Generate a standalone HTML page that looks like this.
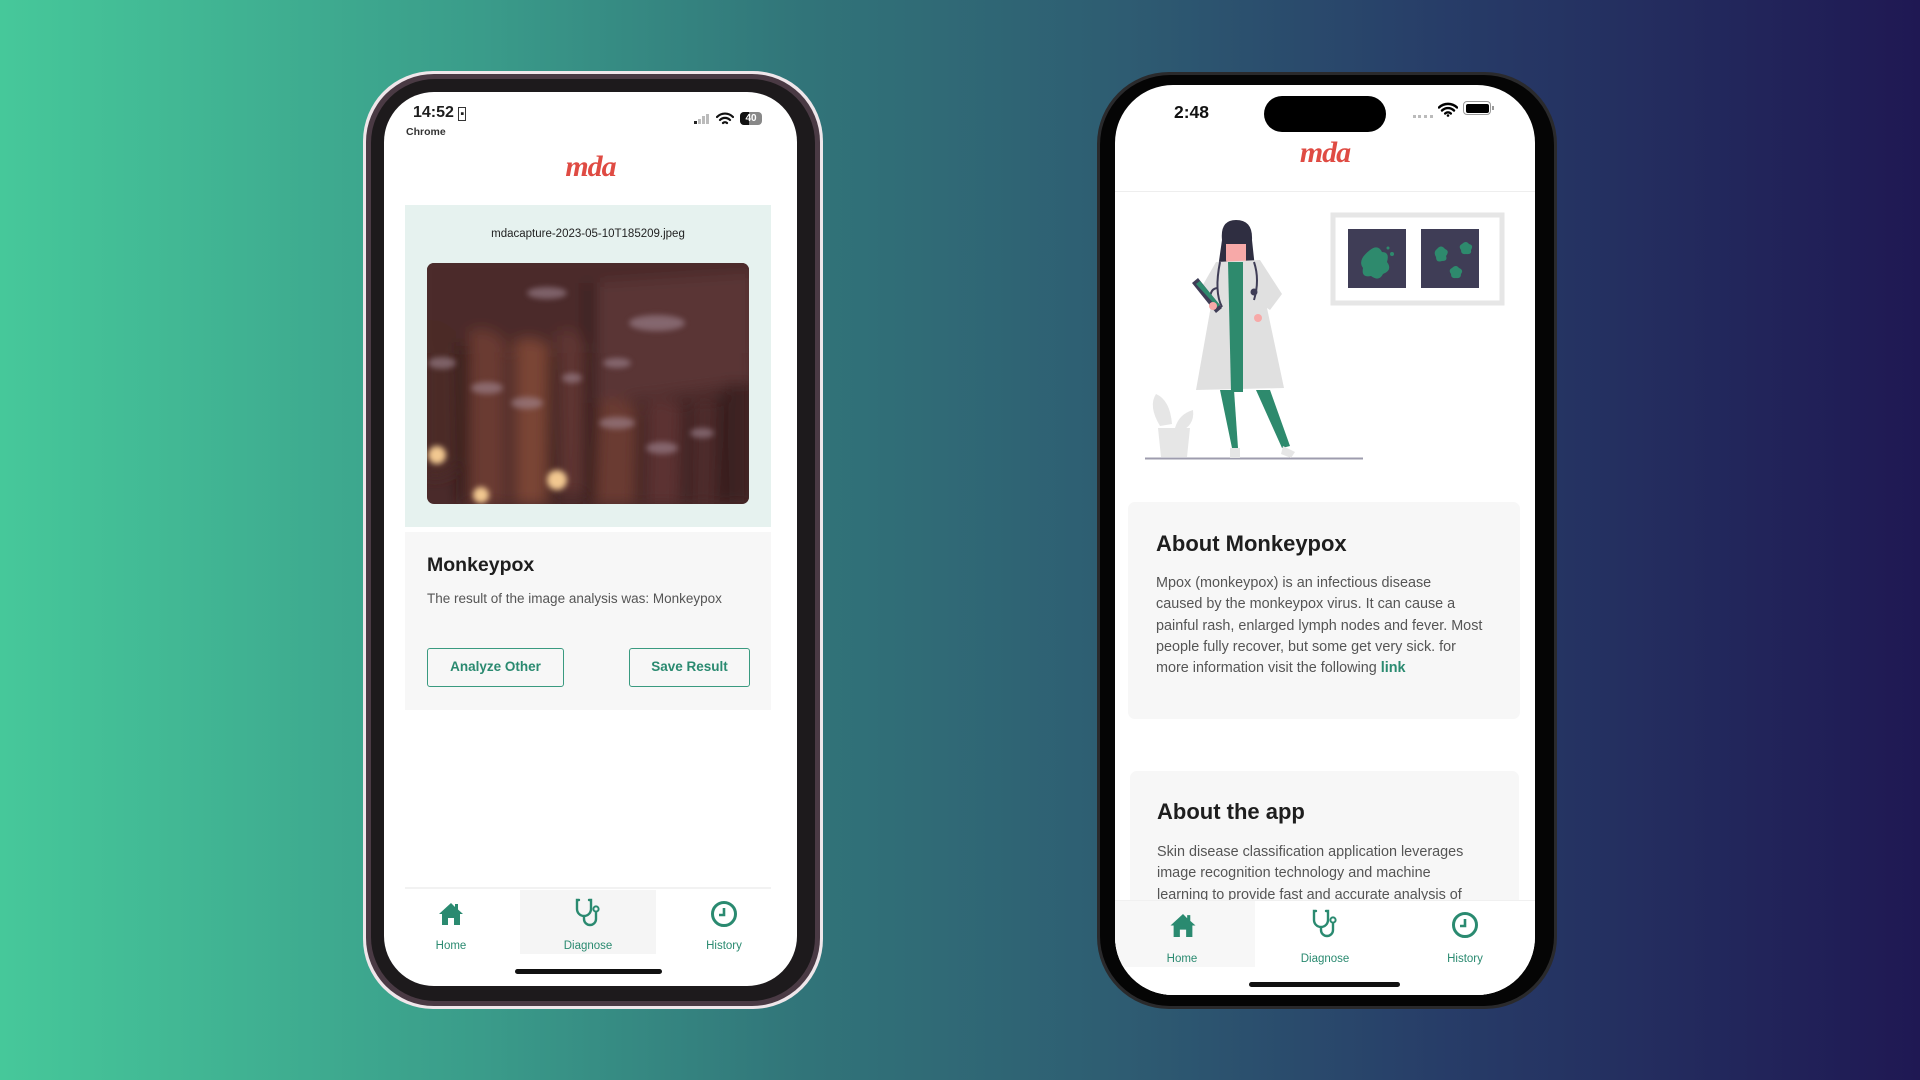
<!DOCTYPE html>
<html><head><meta charset="utf-8"><style>
*{margin:0;padding:0;box-sizing:border-box}
body{width:1920px;height:1080px;overflow:hidden;position:relative;font-family:"Liberation Sans",sans-serif;background:linear-gradient(90deg,#46c89a 0%,#3a9c8a 25%,#317479 42%,#2e5d72 58%,#273d68 75%,#1f1853 100%)}
.a{position:absolute}
.t{color:#1e1e1e}
.g{color:#2a8a70}
.logo{font-family:"Liberation Serif",serif;font-style:italic;font-weight:bold;color:#df4b43;font-size:30px;letter-spacing:-1px}
.btn{position:absolute;border:1.5px solid #3a9a80;border-radius:3px;color:#2a8a70;font-weight:bold;font-size:13.5px;text-align:center;line-height:36px;background:#f7f7f7}
.lbl{position:absolute;font-size:11.5px;color:#2a8a70;text-align:center;width:100px}
.p{font-size:14.4px;color:#555;line-height:21.3px;white-space:nowrap}
</style></head><body>

<!-- Phone 1 -->
<div class="a" style="left:363px;top:71px;width:460px;height:938px;border-radius:70px;background:#efe6ea"></div>
<div class="a" style="left:366px;top:74px;width:454px;height:932px;border-radius:68px;background:#4a3a44"></div>
<div class="a" style="left:371px;top:79px;width:444px;height:922px;border-radius:64px;background:#1d1a1c"></div>
<div class="a" style="left:384px;top:92px;width:413px;height:894px;border-radius:50px;background:#fff;overflow:hidden">
  <div class="a t" style="left:29px;top:12px;font-size:16px;font-weight:bold">14:52 <span style="font-size:11px;border:1.5px solid #333;padding:0 1px">▪</span></div>
  <div class="a t" style="left:22px;top:34px;font-size:10.5px;font-weight:bold;color:#333">Chrome</div>
  <div class="a" style="left:310px;top:22px;width:17px;height:10px">
    <div class="a" style="left:0;top:7px;width:3px;height:3px;background:#222"></div>
    <div class="a" style="left:4px;top:5px;width:3px;height:5px;background:#bbb"></div>
    <div class="a" style="left:8px;top:2px;width:3px;height:8px;background:#bbb"></div>
    <div class="a" style="left:12px;top:0;width:3px;height:10px;background:#bbb"></div>
  </div>
  <svg class="a" style="left:332px;top:20px" width="18" height="14" viewBox="0 0 18 14"><path d="M1 5a11 11 0 0 1 16 0M4 8a7 7 0 0 1 10 0M7 11a3 3 0 0 1 4 0" stroke="#111" stroke-width="2.2" fill="none" stroke-linecap="round"/></svg>
  <div class="a" style="left:356px;top:20px;width:22px;height:13px;border-radius:4px;background:#888;font-size:10px;font-weight:bold;color:#fff;line-height:13px;text-align:center"><span style="background:#111;display:block;width:9px;height:13px;position:absolute;left:0;border-radius:4px 0 0 4px"></span><span style="position:relative">40</span></div>
  <div class="a logo" style="left:0;width:413px;text-align:center;top:58px">mda</div>
  <div class="a" style="left:21px;top:113px;width:366px;height:322px;background:#e6f2ef"></div>
  <div class="a" style="left:21px;top:136px;width:366px;text-align:center;font-size:11.5px;color:#222">mdacapture-2023-05-10T185209.jpeg</div>
  <svg class="a" style="left:43px;top:171px;border-radius:7px" width="322" height="241" viewBox="0 0 322 241">
    <defs><filter id="b" x="-20%" y="-20%" width="140%" height="140%"><feGaussianBlur stdDeviation="7"/></filter><filter id="b2"><feGaussianBlur stdDeviation="3"/></filter></defs>
    <rect width="322" height="241" fill="#4a2a2a"/>
    <g filter="url(#b)">
      <rect x="-10" y="-10" width="342" height="100" fill="#4b2a2c"/>
      <path d="M-5 60 Q10 50 30 70 L32 200 Q15 220 -5 210Z" fill="#4c2a27"/>
      <path d="M42 70 Q60 60 78 80 L78 241 L42 241Z" fill="#6a3a30"/>
      <path d="M88 80 Q105 70 122 85 L120 241 L88 241Z" fill="#7a4434"/>
      <path d="M130 70 Q145 60 158 80 L156 230 L132 230Z" fill="#5e3430"/>
      <path d="M168 20 L325 10 L325 120 L168 140Z" fill="#5a3434"/>
      <path d="M172 140 Q190 130 210 145 L208 241 L168 241Z" fill="#6a3a30"/>
      <path d="M220 140 Q238 130 255 145 L252 241 L218 241Z" fill="#5c3230"/>
      <path d="M264 140 Q280 130 292 140 L290 241 L262 241Z" fill="#4e2c2c"/>
      <path d="M298 120 L325 120 L325 241 L296 241Z" fill="#3e2424"/>
      <rect x="33" y="80" width="7" height="160" fill="#1e1010"/>
      <rect x="123" y="90" width="6" height="150" fill="#241313"/>
      <rect x="160" y="20" width="7" height="220" fill="#1e1010"/>
      <rect x="212" y="150" width="5" height="90" fill="#241313"/>
      <rect x="257" y="140" width="5" height="100" fill="#1e1010"/>
      <rect x="292" y="130" width="5" height="110" fill="#1e1010"/>
    </g>
    <g filter="url(#b2)" fill="#a8909e" opacity=".55"><ellipse cx="60" cy="125" rx="16" ry="6"/><ellipse cx="100" cy="140" rx="16" ry="6"/><ellipse cx="145" cy="115" rx="10" ry="5"/><ellipse cx="190" cy="160" rx="18" ry="6"/><ellipse cx="235" cy="185" rx="16" ry="6"/><ellipse cx="275" cy="170" rx="12" ry="5"/><ellipse cx="230" cy="60" rx="28" ry="8"/><ellipse cx="15" cy="100" rx="14" ry="6"/><ellipse cx="120" cy="30" rx="20" ry="6"/><ellipse cx="190" cy="100" rx="14" ry="5"/></g>
    <g filter="url(#b2)" fill="#f2c890"><circle cx="10" cy="192" r="9"/><circle cx="54" cy="232" r="8"/><circle cx="130" cy="217" r="10"/></g>
  </svg>
  <div class="a" style="left:21px;top:440px;width:366px;height:178px;background:#f7f7f7"></div>
  <div class="a t" style="left:43px;top:462px;font-size:19.5px;font-weight:bold">Monkeypox</div>
  <div class="a" style="left:43px;top:499px;font-size:13.5px;color:#555">The result of the image analysis was: Monkeypox</div>
  <div class="btn" style="left:43px;top:556px;width:137px;height:39px">Analyze Other</div>
  <div class="btn" style="left:245px;top:556px;width:121px;height:39px">Save Result</div>
  <div class="a" style="left:21px;top:795px;width:366px;height:2px;background:#f2f2f2"></div>
  <div class="a" style="left:136px;top:798px;width:136px;height:64px;background:#f5f5f5"></div>
  <svg class="a" style="left:54px;top:810px" width="26" height="24" viewBox="0 0 26 24"><path d="M13 1 L1 12 L4 12 L4 23 L10 23 L10 16 L16 16 L16 23 L22 23 L22 12 L25 12 L20 7.5 L20 2 L17 2 L17 5Z" fill="#2a8a70"/></svg>
  <svg class="a" style="left:191px;top:806px" width="26" height="30" viewBox="0 0 26 30"><path d="M4 2 L2 2 L2 11 A7 7 0 0 0 16 11 L16 2 L14 2 M9 18 L9 21 A6 6 0 0 0 21 21 L21 14" stroke="#2a8a70" stroke-width="2.4" fill="none" stroke-linecap="round"/><circle cx="21" cy="11" r="2.6" stroke="#2a8a70" stroke-width="2" fill="none"/></svg>
  <svg class="a" style="left:326px;top:808px" width="28" height="28" viewBox="0 0 28 28"><circle cx="14" cy="14" r="11.5" stroke="#2a8a70" stroke-width="3" fill="none"/><path d="M14 8 L14 15 L9 15" stroke="#2a8a70" stroke-width="2.6" fill="none"/></svg>
  <div class="lbl" style="left:17px;top:848px">Home</div>
  <div class="lbl" style="left:154px;top:848px">Diagnose</div>
  <div class="lbl" style="left:290px;top:848px">History</div>
  <div class="a" style="left:131px;top:877px;width:147px;height:5px;border-radius:3px;background:#111"></div>
</div>

<!-- Phone 2 -->
<div class="a" style="left:1097px;top:72px;width:460px;height:937px;border-radius:72px;background:#2a2a2c"></div>
<div class="a" style="left:1100px;top:75px;width:454px;height:931px;border-radius:70px;background:#050505"></div>
<div class="a" style="left:1115px;top:85px;width:420px;height:910px;border-radius:58px;background:#fff;overflow:hidden">
  <div class="a t" style="left:59px;top:17px;font-size:17.5px;font-weight:bold;color:#111">2:48</div>
  <div class="a" style="left:149px;top:11px;width:122px;height:36px;border-radius:18px;background:#000"></div>
  <div class="a" style="left:298px;top:30px;width:20px;height:3px;border-top:3px dotted #bbb"></div>
  <svg class="a" style="left:323px;top:17px" width="20" height="15" viewBox="0 0 20 15"><path d="M1 5.5a13 13 0 0 1 18 0M4 8.5a8.5 8.5 0 0 1 12 0M7.2 11.5a4 4 0 0 1 5.6 0" stroke="#000" stroke-width="2.4" fill="none" stroke-linecap="round"/><circle cx="10" cy="13.5" r="1.3"/></svg>
  <div class="a" style="left:348px;top:16px;width:28px;height:14px;border-radius:4px;border:1.5px solid #999;padding:1.5px"><div style="width:100%;height:100%;background:#000;border-radius:2px"></div></div>
  <div class="a" style="left:377px;top:21px;width:2px;height:4px;background:#999"></div>
  <div class="a logo" style="left:0;width:420px;text-align:center;top:51px">mda</div>
  <div class="a" style="left:0;top:106px;width:420px;height:1px;background:#eee"></div>
  <div class="a" style="left:13px;top:417px;width:392px;height:217px;border-radius:7px;background:#f7f7f7"></div>
  <div class="a t" style="left:41px;top:446px;font-size:22px;font-weight:bold">About Monkeypox</div>
  <div class="a p" style="left:41px;top:488px">Mpox (monkeypox) is an infectious disease<br>caused by the monkeypox virus. It can cause a<br>painful rash, enlarged lymph nodes and fever. Most<br>people fully recover, but some get very sick. for<br>more information visit the following <b style="color:#2a8a70">link</b></div>
  <div class="a" style="left:15px;top:686px;width:389px;height:230px;border-radius:7px;background:#f7f7f7"></div>
  <div class="a t" style="left:42px;top:714px;font-size:22px;font-weight:bold">About the app</div>
  <div class="a p" style="left:42px;top:757px">Skin disease classification application leverages<br>image recognition technology and machine<br>learning to provide fast and accurate analysis of</div>
  <div class="a" style="left:0;top:815px;width:420px;height:95px;background:#fff;border-top:1px solid #f0f0f0"></div>
  <div class="a" style="left:0;top:816px;width:140px;height:66px;background:#f7f7f7"></div>
  <svg class="a" style="left:54px;top:828px" width="28" height="25" viewBox="0 0 26 24"><path d="M13 1 L1 12 L4 12 L4 23 L10 23 L10 16 L16 16 L16 23 L22 23 L22 12 L25 12 L20 7.5 L20 2 L17 2 L17 5Z" fill="#2a8a70"/></svg>
  <svg class="a" style="left:197px;top:824px" width="26" height="30" viewBox="0 0 26 30"><path d="M4 2 L2 2 L2 11 A7 7 0 0 0 16 11 L16 2 L14 2 M9 18 L9 21 A6 6 0 0 0 21 21 L21 14" stroke="#2a8a70" stroke-width="2.4" fill="none" stroke-linecap="round"/><circle cx="21" cy="11" r="2.6" stroke="#2a8a70" stroke-width="2" fill="none"/></svg>
  <svg class="a" style="left:336px;top:826px" width="28" height="28" viewBox="0 0 28 28"><circle cx="14" cy="14" r="11.5" stroke="#2a8a70" stroke-width="3" fill="none"/><path d="M14 8 L14 15 L9 15" stroke="#2a8a70" stroke-width="2.6" fill="none"/></svg>
  <div class="lbl" style="left:17px;top:868px">Home</div>
  <div class="lbl" style="left:160px;top:868px">Diagnose</div>
  <div class="lbl" style="left:300px;top:868px">History</div>
  <div class="a" style="left:134px;top:897px;width:151px;height:5px;border-radius:3px;background:#111"></div>
</div>

<!-- Illustration (page coords) -->
<svg class="a" style="left:0;top:0" width="1920" height="1080" viewBox="0 0 1920 1080">
  <rect x="1333" y="215" width="169" height="88" fill="none" stroke="#e6e6e6" stroke-width="5"/>
  <rect x="1348" y="229" width="58" height="59" fill="#3f3d56"/>
  <rect x="1421" y="229" width="58" height="59" fill="#3f3d56"/>
  <path d="M1370 250 q8 -6 12 2 q8 0 5 10 q6 8 -4 12 q-4 8 -12 2 q-10 2 -8 -8 q-6 -8 7 -18z" fill="#2e8a6d"/>
  <circle cx="1392" cy="254" r="2" fill="#2e8a6d"/><circle cx="1388" cy="248" r="1.5" fill="#2e8a6d"/>
  <path d="M1437 249 q4 -5 8 0 q5 2 1 7 q2 5 -4 5 q-6 2 -6 -4 q-3 -5 1 -8z" fill="#2e8a6d"/>
  <path d="M1462 244 q4 -4 7 0 q5 1 2 6 q1 5 -5 4 q-5 1 -5 -4 q-3 -4 1 -6z" fill="#2e8a6d"/>
  <path d="M1452 268 q4 -4 7 0 q5 2 2 6 q0 5 -5 4 q-5 1 -5 -4 q-3 -4 1 -6z" fill="#2e8a6d"/>
  <path d="M1160 426 q-12 -20 -4 -32 q14 6 16 30z" fill="#e6e6e6"/>
  <path d="M1175 428 q4 -14 18 -18 q2 16 -14 22z" fill="#e6e6e6"/>
  <path d="M1158 428 L1190 428 L1187 457 L1161 457Z" fill="#e6e6e6"/>
  <line x1="1145" y1="458.5" x2="1363" y2="458.5" stroke="#9e9cae" stroke-width="2"/>
  <path d="M1222 240 q-2 -20 14 -20 q17 0 16 20 l3 28 l-37 0z" fill="#2f2e41"/>
  <rect x="1226" y="236" width="20" height="27" rx="3" fill="#f7a9a8"/>
  <rect x="1222" y="236" width="28" height="8" fill="#2f2e41"/>
  <path d="M1220 390 L1234 390 L1238 448 L1232 448Z" fill="#2e8a6d"/>
  <path d="M1256 390 L1270 390 L1290 446 L1282 448Z" fill="#2e8a6d"/>
  <path d="M1230 448 h10 v10 h-10z M1283 446 l12 6 l-4 6 l-10 -4z" fill="#e6e6e6"/>
  <path d="M1216 262 L1260 260 L1282 294 L1270 310 L1267 308 L1284 388 L1196 390 L1212 300 L1200 290Z" fill="#e0e0e0"/>
  <path d="M1228 262 L1243 262 L1243 392 L1231 392Z" fill="#2e8a6d"/>
  <path d="M1220 262 q-6 30 2 45 M1254 262 q6 18 0 38" stroke="#3f3d56" stroke-width="2" fill="none"/>
  <circle cx="1254" cy="292" r="3.5" fill="#3f3d56"/>
  <path d="M1218 288 q-8 0 -8 12" stroke="#3f3d56" stroke-width="2" fill="none"/>
  <path d="M1192 283 l6 -5 l24 30 l-6 5z" fill="#3f3d56"/>
  <path d="M1196 284 l4 -3 l20 24 l-3 2z" fill="#2e8a6d"/>
  <circle cx="1213" cy="306" r="4" fill="#f7a9a8"/>
  <circle cx="1258" cy="318" r="4" fill="#f7a9a8"/>
</svg>
</body></html>
